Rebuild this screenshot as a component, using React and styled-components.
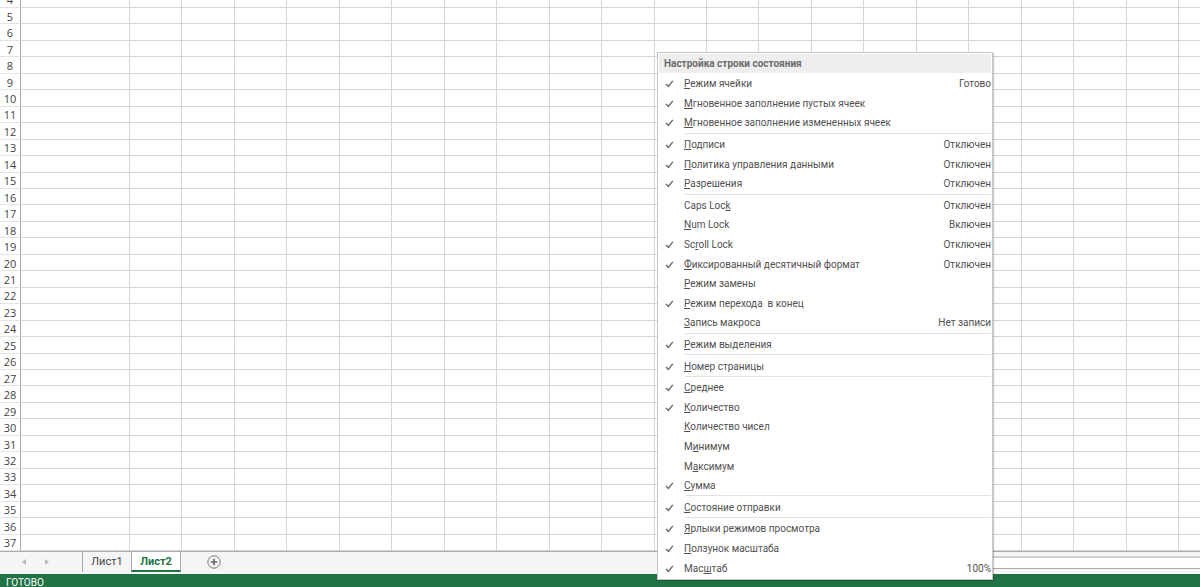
import React from "react";
import styled, { createGlobalStyle } from "styled-components";

const rows = Array.from({ length: 34 }, (_, i) => i + 4);
const columns = Array.from({ length: 22 }, (_, i) => i);

// "&" stands before the access key letter
const groups = [
  [
    { label: "&Режим ячейки", checked: true, value: "Готово" },
    { label: "&Мгновенное заполнение пустых ячеек", checked: true },
    { label: "&Мгновенное заполнение измененных ячеек", checked: true },
  ],
  [
    { label: "&Подписи", checked: true, value: "Отключен" },
    { label: "&Политика управления данными", checked: true, value: "Отключен" },
    { label: "&Разрешения", checked: true, value: "Отключен" },
  ],
  [
    { label: "Caps Loc&k", value: "Отключен" },
    { label: "&Num Lock", value: "Включен" },
    { label: "Sc&roll Lock", checked: true, value: "Отключен" },
    { label: "&Фиксированный десятичный формат", checked: true, value: "Отключен" },
    { label: "&Режим замены" },
    { label: "&Режим перехода  в конец", checked: true },
    { label: "&Запись макроса", value: "Нет записи" },
  ],
  [{ label: "&Режим выделения", checked: true }],
  [{ label: "&Номер страницы", checked: true }],
  [
    { label: "&Среднее", checked: true },
    { label: "&Количество", checked: true },
    { label: "&Количество чисел" },
    { label: "М&инимум" },
    { label: "М&аксимум" },
    { label: "&Сумма", checked: true },
  ],
  [{ label: "&Состояние отправки", checked: true }],
  [
    { label: "&Ярлыки режимов просмотра", checked: true },
    { label: "&Ползунок масштаба", checked: true },
    { label: "Мас&штаб", checked: true, value: "100%" },
  ],
];

function MenuRow({ label, checked, value }) {
  const [before, rest] = label.split("&");
  return (
    <MenuItem role="menuitemcheckbox" aria-checked={!!checked}>
      <CheckCell>
        {checked && (
          <svg width="10" height="8" viewBox="0 0 10 8" fill="none">
            <path d="M1 3.9 3.4 6.4 7.8 0.9" stroke="#6a6a6a" strokeWidth="1.4" />
          </svg>
        )}
      </CheckCell>
      <MenuLabel>
        {before}
        <u>{rest[0]}</u>
        {rest.slice(1)}
      </MenuLabel>
      <span>{value}</span>
    </MenuItem>
  );
}

function App() {
  return (
    <Window>
      <GlobalStyle />
      <Sheet>
        <tbody>
          {rows.map((row) => (
            <tr key={row}>
              <th scope="row">{row}</th>
              {columns.map((column) => (
                <td key={column} />
              ))}
            </tr>
          ))}
        </tbody>
      </Sheet>

      <TabBar>
        <NavButtons>
          <button aria-label="←">
            <svg width="4" height="6" viewBox="0 0 4 6">
              <path d="M4 0v6L0 3z" fill="#b9b9b9" />
            </svg>
          </button>
          <button aria-label="→">
            <svg width="4" height="6" viewBox="0 0 4 6">
              <path d="M0 0v6l4-3z" fill="#b9b9b9" />
            </svg>
          </button>
        </NavButtons>
        <Tab>Лист1</Tab>
        <Tab $active>Лист2</Tab>
        <AddButton aria-label="+">
          <svg width="14" height="14" viewBox="0 0 14 14" fill="none">
            <circle cx="7" cy="7" r="6.2" stroke="#777" />
            <path d="M7 3.7v6.6M3.7 7h6.6" stroke="#666" strokeWidth="1.6" />
          </svg>
        </AddButton>
        <ScrollTrack>
          <ScrollThumb />
        </ScrollTrack>
      </TabBar>

      <StatusBar>ГОТОВО</StatusBar>

      <Menu role="menu">
        <MenuTitle>Настройка строки состояния</MenuTitle>
        {groups.map((group, i) => (
          <React.Fragment key={i}>
            {i > 0 && <Separator />}
            {group.map((item) => (
              <MenuRow key={item.label} {...item} />
            ))}
          </React.Fragment>
        ))}
      </Menu>
    </Window>
  );
}

const GlobalStyle = createGlobalStyle`
  * {
    box-sizing: border-box;
  }
  body {
    margin: 0;
    background: #fff;
    font-family: Roboto, "Noto Sans", sans-serif;
  }
  button {
    border: none;
    padding: 0;
    background: none;
    font: inherit;
    color: inherit;
  }
`;

const Window = styled.div`
  position: relative;
  display: flex;
  flex-direction: column;
  height: 100vh;
  overflow: hidden;
`;

const Sheet = styled.table`
  display: grid;
  flex: 1;
  min-height: 0;
  tbody {
    display: grid;
    grid-template-rows: 8px repeat(33, minmax(0, 1fr));
    min-height: 0;
  }
  tr {
    display: grid;
    grid-template-columns: 21px 109px repeat(20, minmax(0, 1fr)) 21px;
    min-height: 0;
  }
  th,
  td {
    padding: 0;
    border-right: 1px solid #d6d6d6;
    border-bottom: 1px solid #d6d6d6;
  }
  td:last-child {
    border-right: none;
  }
  th {
    display: flex;
    align-items: center;
    justify-content: center;
    overflow: hidden;
    padding-top: 2px;
    border-right-color: #ababab;
    border-bottom-color: #e4e4e4;
    color: #444;
    font-family: "Open Sans", "Noto Sans", sans-serif;
    font-size: 11px;
    font-weight: 400;
    line-height: 14px;
  }
  tr:first-child th {
    align-items: flex-end;
  }
`;

const TabBar = styled.div`
  display: flex;
  height: 23px;
  border-top: 1px solid #ababab;
  background: #f5f5f5;
  color: #444;
  font-size: 11px;
`;

const NavButtons = styled.div`
  display: flex;
  align-items: center;
  gap: 19px;
  width: 83px;
  height: 20px;
  padding-left: 22px;
  border-right: 1px solid #ababab;
  button {
    display: flex;
  }
`;

const Tab = styled.button`
  && {
    width: ${(props) => (props.$active ? "50px" : "48px")};
    height: 20px;
    line-height: 20px;
    ${(props) =>
      props.$active &&
      `
      background: #fff;
      color: #217346;
      font-weight: 700;
      border-left: 1px solid #ababab;
      border-right: 1px solid #ababab;
      border-bottom: 2px solid #217346;
    `}
  }
`;

const AddButton = styled.button`
  display: flex;
  align-items: center;
  width: 14px;
  height: 20px;
  margin-left: 26px;
`;

const ScrollTrack = styled.div`
  width: 30%;
  margin-left: auto;
  padding-top: 4px;
`;

const ScrollThumb = styled.div`
  height: 13px;
  border-top: 2px solid #d0d0d0;
  border-bottom: 1px solid #ababab;
  background: #fff;
`;

const StatusBar = styled.div`
  height: 13px;
  padding-left: 6px;
  overflow: hidden;
  background: #217346;
  color: #fff;
  font-size: 10px;
  line-height: 17px;
`;

const Menu = styled.div`
  position: absolute;
  top: 52px;
  right: 207px;
  bottom: 7px;
  display: flex;
  flex-direction: column;
  width: 336px;
  padding: 1px;
  border: 1px solid #c6c6c6;
  background: #fff;
  box-shadow: 1px 1px 1px rgba(0, 0, 0, 0.2);
  color: #505050;
  font-size: 10px;
`;

const MenuTitle = styled.div`
  height: 19px;
  margin-bottom: 1px;
  padding-left: 5px;
  background: #eee;
  color: #6a6a6a;
  font-weight: 700;
  line-height: 19px;
`;

const MenuItem = styled.button`
  && {
    display: flex;
    flex: 1;
    align-items: center;
    min-height: 0;
    padding-top: 1px;
    line-height: 16px;
    text-align: left;
  }
`;

const CheckCell = styled.span`
  display: flex;
  width: 25px;
  padding-left: 6px;
`;

const MenuLabel = styled.span`
  flex: 1;
  white-space: pre;
`;

const Separator = styled.div`
  height: 2px;
  margin-left: 26px;
  border-top: 1px solid #e1e1e1;
`;

export default App;
